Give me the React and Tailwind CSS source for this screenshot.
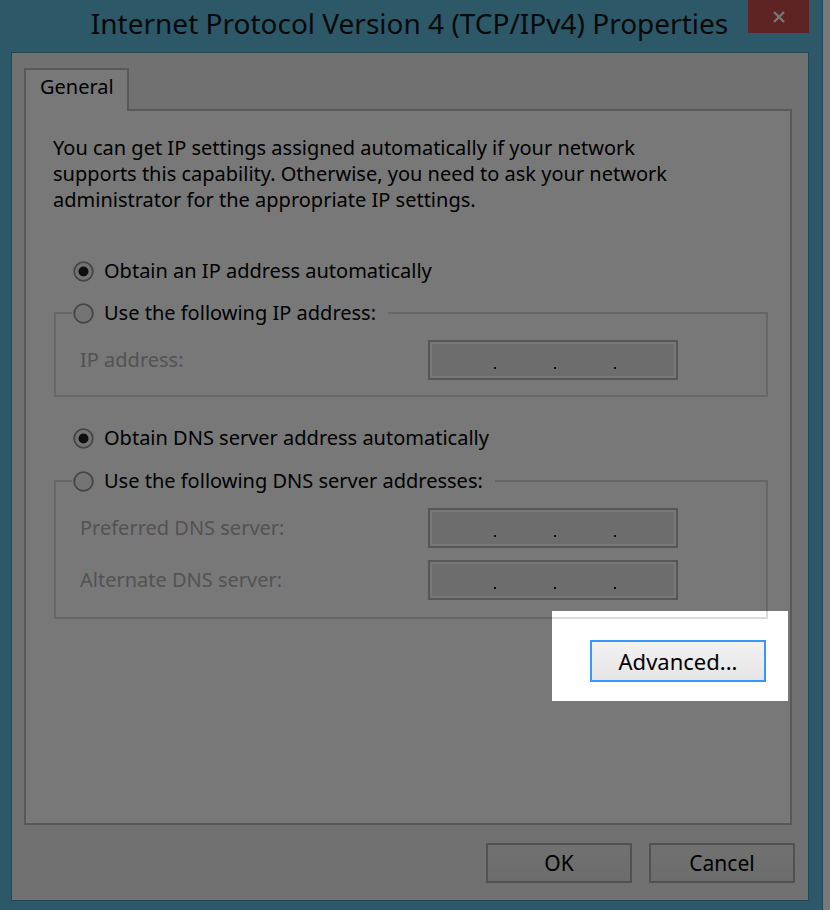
import React from "react";

function Radio({ checked }) {
  return (
    <svg width="21" height="21" viewBox="0 0 21 21" className="shrink-0">
      <circle cx="10.5" cy="10.5" r="9.3" fill="#f6f6f6" stroke="#929292" strokeWidth="1.8" />
      {checked && <circle cx="10.5" cy="10.5" r="5" fill="#1e1e1e" />}
    </svg>
  );
}

function IpField() {
  return (
    <div className="w-[250px] h-[40px] shrink-0 border-2 border-[#b6b6b6] bg-[#e8e8e8] shadow-[inset_0_0_0_2px_#ffffff] flex items-start pt-[25px] pl-[64px] gap-[58px]">
      <div className="w-[2px] h-[2px] bg-[#222]" />
      <div className="w-[2px] h-[2px] bg-[#222]" />
      <div className="w-[2px] h-[2px] bg-[#222]" />
    </div>
  );
}

function FieldRow({ label }) {
  return (
    <div className="flex items-center pl-[8px]">
      <span className="flex-1 text-[#b0b0b0]">{label}</span>
      <div className="mr-[72px]">
        <IpField />
      </div>
    </div>
  );
}

function Group({ legend, children, className }) {
  return (
    <fieldset className={"ml-[1px] w-[714px] border-2 border-[#dcdcdc] px-[16px] " + className}>
      <legend className="pl-[1px] pr-[12px]">
        <div className="h-[26px] flex items-center gap-[10px]">
          <Radio />
          <span>{legend}</span>
        </div>
      </legend>
      {children}
    </fieldset>
  );
}

function WinButton({ children }) {
  return (
    <button className="w-[146px] h-[40px] border-2 border-[#acacac] bg-gradient-to-b from-[#f0f0f0] to-[#e5e5e5] text-black text-[21px]">
      {children}
    </button>
  );
}

export default function App() {
  return (
    <div className="w-[830px] h-[910px] overflow-hidden flex bg-white text-black text-[20px] leading-[26px] font-['Noto_Sans','Open_Sans',sans-serif]">
      <div className="w-[823px] h-[910px] shrink-0 bg-[#5ebbdd] border-r border-[#4297b9] flex flex-col pl-[11px] pr-[13px]">
        {/* title bar */}
        <div className="h-[52px] flex items-start">
          <div className="flex-1 pl-[60px] pt-[5px] text-center text-[28px] leading-[36px] text-[#141414]">
            Internet Protocol Version 4 (TCP/IPv4) Properties
          </div>
          <div className="w-[61px] h-[33px] bg-[#c84d4d] flex items-center justify-center">
            <svg width="14" height="14" viewBox="0 0 14 14">
              <path d="M2 2L12 12M12 2L2 12" stroke="#ffffff" strokeWidth="2.4" />
            </svg>
          </div>
        </div>

        {/* dialog body */}
        <div className="h-[849px] border border-[#4297b9] bg-[#f0f0f0] flex flex-col pl-[12px] pr-[13px] pt-[15px] pb-[16px]">
          <div className="flex">
            <div className="relative -mb-[2px] h-[43px] w-[105px] border-2 border-b-0 border-[#bebebe] bg-white pl-[14px] pt-[4px]">
              General
            </div>
          </div>
          <div className="mr-[3px] h-[716px] border-2 border-[#bebebe] bg-white pl-[27px] pr-[21px] pt-[24px]">
            <p>
              You can get IP settings assigned automatically if your network
              <br />
              supports this capability. Otherwise, you need to ask your network
              <br />
              administrator for the appropriate IP settings.
            </p>

            <div className="mt-[45px] ml-[20px] h-[26px] flex items-center gap-[10px]">
              <Radio checked />
              <span>Obtain an IP address automatically</span>
            </div>
            <Group legend="Use the following IP address:" className="mt-[16px] pb-[15px]">
              <div className="mt-[14px]">
                <FieldRow label="IP address:" />
              </div>
            </Group>

            <div className="mt-[28px] ml-[20px] h-[26px] flex items-center gap-[10px]">
              <Radio checked />
              <span>Obtain DNS server address automatically</span>
            </div>
            <Group legend="Use the following DNS server addresses:" className="mt-[17px] pb-[17px]">
              <div className="mt-[14px] flex flex-col gap-[12px]">
                <FieldRow label="Preferred DNS server:" />
                <FieldRow label="Alternate DNS server:" />
              </div>
            </Group>

            <div className="mt-[21px] w-[715px] flex justify-end">
              <div className="relative mr-[2px]">
                <button className="w-[176px] h-[42px] border-2 border-[#3399ff] bg-gradient-to-b from-[#f2f2f2] to-[#e5e5e5] text-black text-[22px]">
                  Advanced...
                </button>
                <div className="absolute -top-[29px] -left-[38px] -right-[22px] -bottom-[19px] z-10 pointer-events-none shadow-[0_0_0_2000px_rgba(0,0,0,0.53)]" />
              </div>
            </div>
          </div>

          <div className="mt-[18px] flex justify-end gap-[17px]">
            <WinButton>OK</WinButton>
            <WinButton>Cancel</WinButton>
          </div>
        </div>
      </div>
    </div>
  );
}
